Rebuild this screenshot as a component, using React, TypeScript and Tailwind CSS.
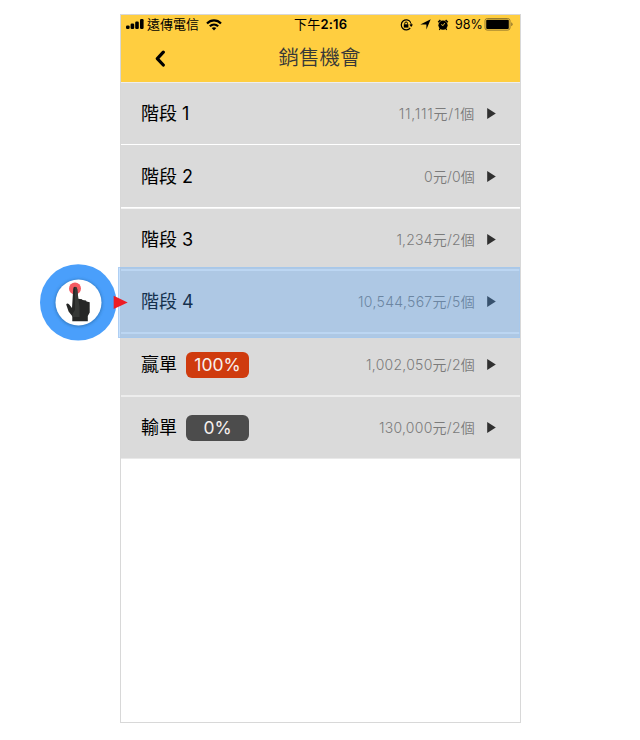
import React from "react";

type Row = {
  label: string;
  num?: string;
  amount: string;
  box: string;
  spacing: string;
  badge?: { text: string; color: string };
};

const rows: Row[] = [
  { label: "階段", num: "1", amount: "11,111元/1個", box: "h-[62px] border-b border-white", spacing: "tracking-[0.75px]" },
  { label: "階段", num: "2", amount: "0元/0個", box: "h-[63px] border-b border-white pt-px", spacing: "tracking-[0.15px]" },
  { label: "階段", num: "3", amount: "1,234元/2個", box: "h-[61px] border-t border-[#f4f4f4] pt-px", spacing: "tracking-[0.2px]" },
  { label: "階段", num: "4", amount: "10,544,567元/5個", box: "h-[65px] border-t-2 border-b-2 border-[#eeeeee]", spacing: "tracking-[0.32px]" },
  { label: "贏單", amount: "1,002,050元/2個", box: "h-[63px] border-b-2 border-[#ededed]", spacing: "tracking-[0.25px]", badge: { text: "100%", color: "bg-[#cf3b0e]" } },
  { label: "輸單", amount: "130,000元/2個", box: "h-[62px] border-b border-[#e9e9e9]", spacing: "tracking-[0.25px]", badge: { text: "0%", color: "bg-[#4c4c4c]" } },
];

function StatusBar() {
  return (
    <div className="grid h-[19px] grid-cols-[168px_1fr_116px] items-center pl-[5px] pr-[4px] text-black">
      <div className="flex items-center">
        <svg className="mr-[3px] h-[11px] w-[18px]" viewBox="0 0 18 11">
          <rect x="0" y="6.4" width="3.6" height="3.6" rx="1.2" />
          <rect x="4.6" y="4.6" width="3.6" height="5.4" rx="1.2" />
          <rect x="9.2" y="2.6" width="3.6" height="7.4" rx="1.2" />
          <rect x="14" y="0" width="3.6" height="10" rx="1.2" />
        </svg>
        <span className="text-[13px] leading-[19px]">遠傳電信</span>
        <svg className="ml-[7px] h-[12px] w-[16px]" viewBox="0 0 16 12" fill="none" stroke="black" strokeWidth="2.2">
          <path d="M1 4.5C5 .4 11 .4 15 4.5" />
          <path d="M3.8 7.3C6.3 4.9 9.7 4.9 12.2 7.3" />
          <path d="M5.7 9.1C7 7.9 9 7.9 10.3 9.1L8 11.4Z" fill="black" stroke="none" />
        </svg>
      </div>
      <div className="whitespace-nowrap text-[13px] font-semibold leading-[19px] tracking-[0.2px]"><span className="font-normal">下午</span>2:16</div>
      <div className="flex items-center">
        <svg className="h-[12px] w-[13px]" viewBox="0 0 13 12" fill="none" stroke="black">
          <path d="M10.4 3A5 5 0 1 0 10.2 9" strokeWidth="1.2" />
          <path d="M10.3 3.1Q11.3 4.5 11.2 6" />
          <path d="M9.3 5.6H13L11.2 8Z" fill="black" stroke="none" />
          <rect x="3.8" y="5.3" width="4.6" height="3.3" fill="black" stroke="none" />
          <path d="M4.7 5.5V4.4a1.4 1.4 0 0 1 2.8 0v1.1" />
        </svg>
        <svg className="ml-[7px] h-[11px] w-[11px]" viewBox="0 0 11 11"><path d="M10.7.2L6.4 10.6V5.6L.3 5.4Z" /></svg>
        <svg className="ml-[6px] h-[12px] w-[12px]" viewBox="0 0 12 12">
          <circle cx="6" cy="6.2" r="4.6" />
          <path d="M1.2 3.2L3.4 1M8.6 1L10.8 3.2" stroke="black" strokeWidth="1.5" />
          <path d="M3 9.6L2.4 10.9M9 9.6l.6 1.3" stroke="black" strokeWidth="1.2" />
          <path d="M7.7 4.1L6.1 6.6L4.2 5.5" stroke="#ffce40" strokeWidth="0.9" fill="none" />
        </svg>
        <span className="ml-[6px] w-[29px] whitespace-nowrap text-[12.5px] leading-[19px]">98%</span>
        <svg className="h-[13px] w-[29px] shrink-0" viewBox="0 0 29 13">
          <rect x="1" y=".5" width="25" height="11.6" rx="2.2" fill="none" stroke="#967a2d" />
          <rect x="2.2" y="1.7" width="22.6" height="9.2" rx="1" />
          <path d="M27.2 4.3Q28.6 5 28.6 6.3T27.2 8.3Z" fill="#967a2d" />
        </svg>
      </div>
    </div>
  );
}

function StageRow({ row }: { row: Row }) {
  return (
    <div className={`flex shrink-0 items-center bg-[#dadada] pl-5 pr-[24px] ${row.box}`}>
      <span className="whitespace-pre pt-px text-[18px] leading-6 text-black">
        {row.label}
        {row.num && <span>{" " + row.num}</span>}
      </span>
      {row.badge && (
        <span className={`ml-[9px] flex h-[26px] w-[63px] items-center justify-center rounded-[6px] text-[17.5px] leading-6 text-[#f7f1ef] ${row.badge.color}`}>
          {row.badge.text}
        </span>
      )}
      <span className={`ml-auto whitespace-nowrap text-[14px] font-[350] leading-5 text-[#7b7b7b] ${row.spacing}`}>{row.amount}</span>
      <svg className="ml-3 h-[11px] w-[9px]" viewBox="0 0 9 11"><path d="M.2 0L8.8 5.5L.2 11Z" fill="#303030" /></svg>
    </div>
  );
}

function TapMarker() {
  return (
    <div className="absolute left-[40px] top-[264px] h-[77px] w-[89px]">
      <svg className="h-full w-full" viewBox="0 0 89 77">
        <defs>
          <filter id="shade" x="-20%" y="-20%" width="140%" height="140%"><feGaussianBlur stdDeviation="1.5" /></filter>
        </defs>
        <circle cx="38.2" cy="38.4" r="38.2" fill="#4a9ffb" />
        <circle cx="38.5" cy="39" r="23.8" fill="#286baa" opacity=".7" filter="url(#shade)" />
        <circle cx="38.5" cy="38.5" r="23" fill="white" />
        <circle cx="35" cy="24.6" r="6" fill="#f45b63" />
        <path d="M33.2 25Q33.2 22.7 35 22.7T37.2 25L38 34.8L42 35.2L42.5 36L46 36.4L46.6 37.6L49.7 38.2V48.5L47.8 52V57.2H32.3V52.3L28.6 47.5L26.2 40.4Q27.2 38.6 29 40.2L32 44Z" fill="#262726" />
        <path d="M35 23v23l-2.5 4v3h7V43L37.2 25Q37 22.8 35 23Z" fill="#363836" />
        <path d="M73.7 31.8L87.7 38.4L73.7 45Z" fill="#ed1c24" />
      </svg>
    </div>
  );
}

export default function App() {
  return (
    <div className="relative flex h-[740px] w-[640px] overflow-hidden bg-white pl-[120px] pt-[14px] font-['Inter','Noto_Sans_CJK_TC',sans-serif]">
      <main className="flex h-[709px] w-[401px] flex-col border border-[#d8d8d8] bg-white">
        <header className="h-[67px] shrink-0 bg-[#ffce40]">
          <StatusBar />
          <div className="relative flex h-[48px] items-center justify-center pr-[2px] text-[#383838]">
            <svg className="absolute left-[33px] top-[16px] h-[18px] w-[13px]" viewBox="0 0 13 18" fill="none" stroke="black" strokeWidth="3.2" strokeLinejoin="round" strokeLinecap="round">
              <path d="M9.3 2.2L3.3 8.6L9.3 15" />
            </svg>
            <h1 className="text-[20.5px] font-[350] leading-7">銷售機會</h1>
          </div>
        </header>
        <div className="flex flex-col border-t border-[#eeeeee]">
          {rows.map((row) => <StageRow key={row.label + (row.num ?? "")} row={row} />)}
        </div>
      </main>
      <div className="absolute left-[118px] top-[267px] h-[71px] w-[402px] border border-[#a4c8ee]/70 bg-[#4a9ffb]/30" />
      <TapMarker />
    </div>
  );
}
